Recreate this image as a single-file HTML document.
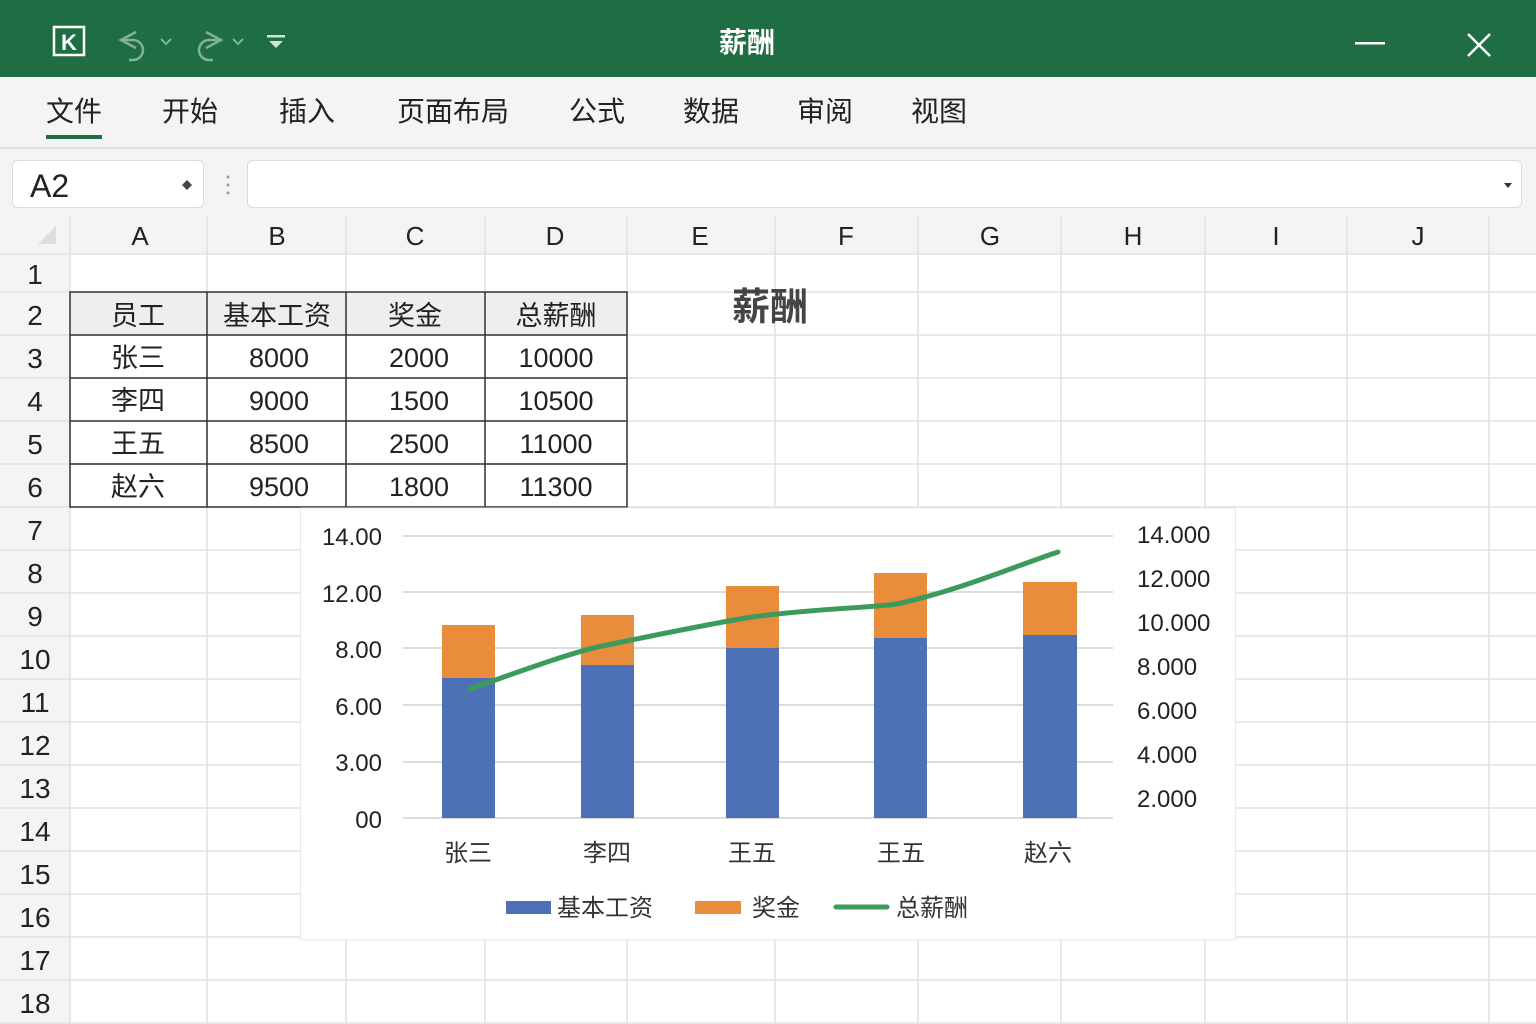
<!DOCTYPE html>
<html><head><meta charset="utf-8">
<style>
body{margin:0;width:1536px;height:1024px;overflow:hidden;background:#fff;font-family:"Liberation Sans","Noto Sans CJK SC",sans-serif;}
svg text{font-family:"Liberation Sans","Noto Sans CJK SC",sans-serif;}
</style></head><body>
<svg width="1536" height="1024" viewBox="0 0 1536 1024" xmlns="http://www.w3.org/2000/svg" style="position:absolute;left:0;top:0">
<!-- title bar -->
<rect x="0" y="0" width="1536" height="77" fill="#1f6e43"/>
<rect x="54" y="27" width="30" height="28" fill="none" stroke="#fff" stroke-width="2.5"/>
<text x="69" y="50" font-size="22" font-weight="bold" fill="#fff" text-anchor="middle">K</text>
<path d="M136 32 l-15 8 l15 8 M121 40 h12 a10 10 0 0 1 0 20 h-4" fill="none" stroke="#7fb392" stroke-width="2.5"/>
<path d="M161 39 l5 5 l5 -5" fill="none" stroke="#7fb392" stroke-width="2"/>
<path d="M206 32 l15 8 l-15 8 M221 40 h-12 a10 10 0 0 0 0 20 h4" fill="none" stroke="#7fb392" stroke-width="2.5"/>
<path d="M233 39 l5 5 l5 -5" fill="none" stroke="#7fb392" stroke-width="2"/>
<rect x="267" y="35" width="18" height="2.5" fill="#cfe3d6"/>
<path d="M269 41 h14 l-7 7 z" fill="#cfe3d6"/>
<text x="747" y="52" font-size="28" font-weight="bold" fill="#fff" text-anchor="middle">薪酬</text>
<rect x="1355" y="42" width="30" height="2.5" fill="#fff"/>
<path d="M1468 34 l22 22 M1490 34 l-22 22" stroke="#fff" stroke-width="2.5"/>
<!-- menu -->
<rect x="0" y="77" width="1536" height="140" fill="#f4f4f4"/>
<line x1="0" y1="148" x2="1536" y2="148" stroke="#e0e0e0" stroke-width="2"/>
<g font-size="28" fill="#222">
<text x="46" y="121">文件</text><text x="162" y="121">开始</text><text x="279" y="121">插入</text>
<text x="397" y="121">页面布局</text><text x="569" y="121">公式</text><text x="683" y="121">数据</text>
<text x="797" y="121">审阅</text><text x="911" y="121">视图</text></g>
<rect x="46" y="135" width="56" height="4" fill="#1f6e43"/>
<!-- formula bar -->
<rect x="12.5" y="160.5" width="191" height="47" rx="5" fill="#fff" stroke="#dcdcdc"/>
<text x="30" y="197" font-size="32" fill="#222">A2</text>
<path d="M187 180 l5 5 l-5 5 l-5 -5 z" fill="#444"/>
<circle cx="228" cy="177" r="1.5" fill="#999"/><circle cx="228" cy="185" r="1.5" fill="#999"/><circle cx="228" cy="193" r="1.5" fill="#999"/>
<rect x="247.5" y="160.5" width="1274" height="47" rx="5" fill="#fff" stroke="#dcdcdc"/>
<path d="M1504 183 h8 l-4 5 z" fill="#333"/>
<!-- headers -->
<rect x="0" y="216" width="1536" height="38" fill="#f4f4f4"/>
<rect x="0" y="254" width="70" height="770" fill="#f4f4f4"/>
<path d="M38 244 l18 -18 v18 z" fill="#ddd"/>
<g stroke="#e2e2e2" stroke-width="1.5">
<line x1="70" y1="216" x2="70" y2="1024"/><line x1="207" y1="216" x2="207" y2="1024"/><line x1="346" y1="216" x2="346" y2="1024"/><line x1="485" y1="216" x2="485" y2="1024"/><line x1="627" y1="216" x2="627" y2="1024"/><line x1="775" y1="216" x2="775" y2="1024"/><line x1="918" y1="216" x2="918" y2="1024"/><line x1="1061" y1="216" x2="1061" y2="1024"/><line x1="1205" y1="216" x2="1205" y2="1024"/><line x1="1347" y1="216" x2="1347" y2="1024"/><line x1="1489" y1="216" x2="1489" y2="1024"/>
<line x1="0" y1="254" x2="1536" y2="254"/><line x1="0" y1="292" x2="1536" y2="292"/><line x1="0" y1="335" x2="1536" y2="335"/><line x1="0" y1="378" x2="1536" y2="378"/><line x1="0" y1="421" x2="1536" y2="421"/><line x1="0" y1="464" x2="1536" y2="464"/><line x1="0" y1="507" x2="1536" y2="507"/><line x1="0" y1="550" x2="1536" y2="550"/><line x1="0" y1="593" x2="1536" y2="593"/><line x1="0" y1="636" x2="1536" y2="636"/><line x1="0" y1="679" x2="1536" y2="679"/><line x1="0" y1="722" x2="1536" y2="722"/><line x1="0" y1="765" x2="1536" y2="765"/><line x1="0" y1="808" x2="1536" y2="808"/><line x1="0" y1="851" x2="1536" y2="851"/><line x1="0" y1="894" x2="1536" y2="894"/><line x1="0" y1="937" x2="1536" y2="937"/><line x1="0" y1="980" x2="1536" y2="980"/><line x1="0" y1="1023" x2="1536" y2="1023"/>
</g>
<g font-size="26" fill="#222" text-anchor="middle">
<text x="140" y="245">A</text><text x="277" y="245">B</text><text x="415" y="245">C</text><text x="555" y="245">D</text><text x="700" y="245">E</text><text x="846" y="245">F</text><text x="990" y="245">G</text><text x="1133" y="245">H</text><text x="1276" y="245">I</text><text x="1418" y="245">J</text>
</g>
<g font-size="28" fill="#222" text-anchor="middle">
<text x="35" y="284">1</text><text x="35" y="325">2</text><text x="35" y="368">3</text><text x="35" y="411">4</text><text x="35" y="454">5</text><text x="35" y="497">6</text><text x="35" y="540">7</text><text x="35" y="583">8</text><text x="35" y="626">9</text><text x="35" y="669">10</text><text x="35" y="712">11</text><text x="35" y="755">12</text><text x="35" y="798">13</text><text x="35" y="841">14</text><text x="35" y="884">15</text><text x="35" y="927">16</text><text x="35" y="970">17</text><text x="35" y="1013">18</text>
</g>
<!-- table -->
<rect x="70" y="292" width="557" height="43" fill="#eeeeee"/>
<g stroke="#333" stroke-width="1.5" fill="none">
<rect x="70" y="292" width="557" height="215"/>
<line x1="207" y1="292" x2="207" y2="507"/><line x1="346" y1="292" x2="346" y2="507"/><line x1="485" y1="292" x2="485" y2="507"/>
<line x1="70" y1="335" x2="627" y2="335"/><line x1="70" y1="378" x2="627" y2="378"/><line x1="70" y1="421" x2="627" y2="421"/><line x1="70" y1="464" x2="627" y2="464"/>
</g>
<g font-size="27" fill="#222" text-anchor="middle">
<text x="138" y="325">员工</text><text x="277" y="325">基本工资</text><text x="415" y="325">奖金</text><text x="556" y="325">总薪酬</text>
<text x="138" y="367">张三</text><text x="279" y="367">8000</text><text x="419" y="367">2000</text><text x="556" y="367">10000</text>
<text x="138" y="410">李四</text><text x="279" y="410">9000</text><text x="419" y="410">1500</text><text x="556" y="410">10500</text>
<text x="138" y="453">王五</text><text x="279" y="453">8500</text><text x="419" y="453">2500</text><text x="556" y="453">11000</text>
<text x="138" y="496">赵六</text><text x="279" y="496">9500</text><text x="419" y="496">1800</text><text x="556" y="496">11300</text>
</g>
<text x="770" y="320" font-size="38" font-weight="bold" fill="#444" text-anchor="middle">薪酬</text>
<!-- chart -->
<rect x="300.5" y="508" width="935" height="432" fill="#fff" stroke="#eaeaea"/>
<g stroke="#dcdcdc" stroke-width="2">
<line x1="403" y1="536" x2="1113" y2="536"/><line x1="403" y1="592" x2="1113" y2="592"/><line x1="403" y1="648" x2="1113" y2="648"/><line x1="403" y1="705" x2="1113" y2="705"/><line x1="403" y1="762" x2="1113" y2="762"/><line x1="403" y1="818" x2="1113" y2="818"/>
</g>
<g font-size="24" fill="#222" text-anchor="end">
<text x="382" y="545">14.00</text><text x="382" y="602">12.00</text><text x="382" y="658">8.00</text><text x="382" y="715">6.00</text><text x="382" y="771">3.00</text><text x="382" y="828">00</text>
</g>
<g font-size="24" fill="#222">
<text x="1137" y="543">14.000</text><text x="1137" y="587">12.000</text><text x="1137" y="631">10.000</text><text x="1137" y="675">8.000</text><text x="1137" y="719">6.000</text><text x="1137" y="763">4.000</text><text x="1137" y="807">2.000</text>
</g>
<g fill="#4e70b5">
<rect x="442" y="678" width="53" height="140"/><rect x="581" y="665" width="53" height="153"/><rect x="726" y="648" width="53" height="170"/><rect x="874" y="638" width="53" height="180"/><rect x="1023" y="635" width="54" height="183"/>
</g>
<g fill="#e98c3c">
<rect x="442" y="625" width="53" height="53"/><rect x="581" y="615" width="53" height="50"/><rect x="726" y="586" width="53" height="62"/><rect x="874" y="573" width="53" height="65"/><rect x="1023" y="582" width="54" height="53"/>
</g>
<path d="M470 689 C540 664 580 650 607 645 C680 630 720 622 752 617 C820 608 870 608 897 604 C960 590 1010 568 1058 552" fill="none" stroke="#3c9a5a" stroke-width="5" stroke-linecap="round"/>
<g font-size="24" fill="#333" text-anchor="middle">
<text x="468" y="861">张三</text><text x="607" y="861">李四</text><text x="752" y="861">王五</text><text x="901" y="861">王五</text><text x="1048" y="861">赵六</text>
</g>
<rect x="506" y="901" width="45" height="13" fill="#4e70b5"/>
<text x="557" y="916" font-size="24" fill="#333">基本工资</text>
<rect x="695" y="901" width="46" height="13" fill="#e98c3c"/>
<text x="752" y="916" font-size="24" fill="#333">奖金</text>
<line x1="836" y1="907" x2="887" y2="907" stroke="#3c9a5a" stroke-width="5" stroke-linecap="round"/>
<text x="896" y="916" font-size="24" fill="#333">总薪酬</text>
</svg>
</body></html>
